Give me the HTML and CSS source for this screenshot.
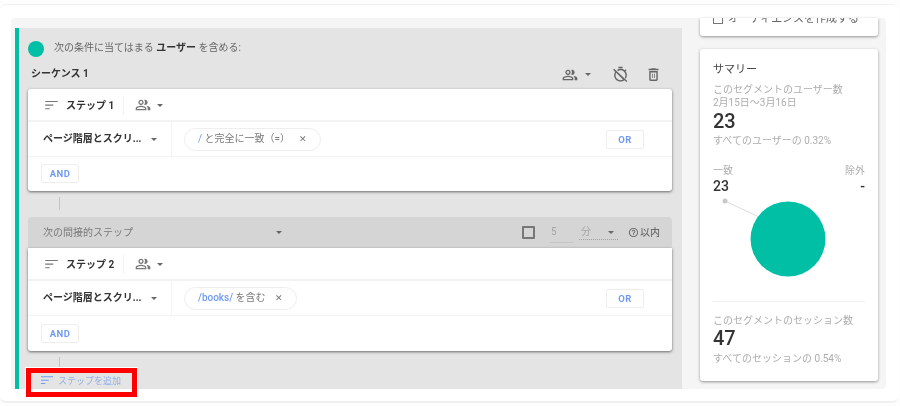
FILE: index.html
```html
<!DOCTYPE html>
<html lang="ja">
<head>
<meta charset="utf-8">
<title>セグメント</title>
<link rel="stylesheet" href="styles.css">
</head>
<body>
<svg class="defs" width="0" height="0" aria-hidden="true">
  <symbol id="people" viewBox="0 0 24 24"><path d="M16.67 13.13C18.04 14.06 19 15.32 19 17v3h4v-3c0-2.18-3.57-3.47-6.33-3.87zM15 12c2.21 0 4-1.79 4-4s-1.79-4-4-4c-.47 0-.91.1-1.33.24C14.5 5.27 15 6.58 15 8s-.5 2.73-1.33 3.76c.42.14.86.24 1.33.24zM9 12c2.21 0 4-1.79 4-4s-1.79-4-4-4-4 1.79-4 4 1.79 4 4 4zm0-6c1.1 0 2 .9 2 2s-.9 2-2 2-2-.9-2-2 .9-2 2-2zM9 13c-2.67 0-8 1.34-8 4v3h16v-3c0-2.66-5.33-4-8-4zm6 5H3v-.99C3.2 16.29 6.3 15 9 15s5.8 1.29 6 2v1z"/></symbol>
  <symbol id="sort" viewBox="0 0 14 10"><path d="M0 0h14v1.2H0zM0 4h9v1.2H0zM0 8h5v1.2H0z"/></symbol>
</svg>
<main class="panel">
  <section class="builder">
    <div class="seq">
      <div class="cond">
        <span class="dot"></span>
        <span>次の条件に当てはまる <b>ユーザー</b> を含める:</span>
      </div>
      <div class="seq-head">
        <b>シーケンス 1</b>
        <div class="seq-tools">
          <svg class="ic-people-lg"><use href="#people"/></svg>
          <span class="caret caret-lg"></span>
          <svg class="ic-tool ic-timer" viewBox="0 0 24 24"><path d="M19.04 4.55l-1.42 1.42C16.07 4.74 14.12 4 12 4c-1.83 0-3.53.55-4.95 1.48l1.46 1.46C9.53 6.35 10.73 6 12 6c3.87 0 7 3.13 7 7 0 1.27-.35 2.47-.94 3.49l1.45 1.45C20.45 16.53 21 14.83 21 13c0-2.12-.74-4.07-1.97-5.61l1.42-1.42-1.41-1.42zM15 1H9v2h6V1zM3.02 4L1.61 5.41l2.92 2.92C3.57 9.77 3 11.82 3 13c0 4.97 4.03 9 9 9 2.12 0 4.07-.74 5.61-1.97l2.58 2.58 1.41-1.41L3.02 4zM12 20c-3.87 0-7-3.13-7-7 0-1.28.35-2.48.95-3.51l9.55 9.56c-1.02.6-2.22.95-3.5.95z"/></svg>
          <svg class="ic-tool ic-trash" viewBox="0 0 24 24"><path d="M6 19c0 1.1.9 2 2 2h8c1.1 0 2-.9 2-2V7H6v12zM8 9h8v10H8V9zm7.5-5l-1-1h-5l-1 1H5v2h14V4zM10 11h1v6h-1zM13 11h1v6h-1z"/></svg>
        </div>
      </div>

      <article class="step">
        <header class="step-head">
          <svg class="ic-sort"><use href="#sort"/></svg>
          <b class="step-name">ステップ 1</b>
          <svg class="ic-people"><use href="#people"/></svg>
          <span class="caret"></span>
        </header>
        <div class="step-row">
          <div class="dim"><b>ページ階層とスクリ...</b><span class="caret"></span></div>
          <div class="filter">
            <span class="chip"><span class="val">/</span> と完全に一致（=）<span class="x">✕</span></span>
            <button class="btn btn-or">OR</button>
          </div>
        </div>
        <div class="step-foot"><button class="btn">AND</button></div>
      </article>

      <div class="link link-first"></div>

      <div class="gap-bar">
        <span class="gap-label">次の間接的ステップ</span>
        <span class="caret gap-caret"></span>
        <span class="check"></span>
        <span class="num">5</span>
        <span class="unit">分<span class="caret"></span></span>
        <svg class="ic-help" viewBox="0 0 24 24"><path d="M11 18h2v-2h-2v2zm1-16C6.48 2 2 6.48 2 12s4.48 10 10 10 10-4.48 10-10S17.52 2 12 2zm0 18c-4.41 0-8-3.59-8-8s3.59-8 8-8 8 3.59 8 8-3.59 8-8 8zm0-14c-2.21 0-4 1.79-4 4h2c0-1.1.9-2 2-2s2 .9 2 2c0 2-3 1.75-3 5h2c0-2.25 3-2.5 3-5 0-2.21-1.79-4-4-4z"/></svg>
        <span class="within">以内</span>
      </div>

      <article class="step step-joined">
        <header class="step-head">
          <svg class="ic-sort"><use href="#sort"/></svg>
          <b class="step-name">ステップ 2</b>
          <svg class="ic-people"><use href="#people"/></svg>
          <span class="caret"></span>
        </header>
        <div class="step-row">
          <div class="dim"><b>ページ階層とスクリ...</b><span class="caret"></span></div>
          <div class="filter">
            <span class="chip"><span class="val val-strong">/books/</span> を含む<span class="x">✕</span></span>
            <button class="btn btn-or">OR</button>
          </div>
        </div>
        <div class="step-foot"><button class="btn">AND</button></div>
      </article>

      <div class="link link-last"></div>

      <div class="add">
        <svg class="ic-add"><use href="#sort"/></svg>
        <span>ステップを追加</span>
        <span class="highlight"></span>
      </div>
    </div>
  </section>

  <aside class="side">
    <div class="card card-clip">
      <div class="aud"><span class="aud-box"></span>オーディエンスを作成する</div>
    </div>
    <div class="card card-sum">
      <h2>サマリー</h2>
      <p class="muted tight">このセグメントのユーザー数<br>2月15日〜3月16日</p>
      <div class="big">23</div>
      <p class="muted share">すべてのユーザーの 0.32%</p>
      <div class="split"><span class="muted">一致</span><span class="muted">除外</span></div>
      <div class="split split-val"><span>23</span><span>-</span></div>
      <svg class="pie" viewBox="0 0 152 104" width="152" height="104">
        <line x1="12" y1="4" x2="46" y2="20" stroke="#dcdcdc" stroke-width="1"/>
        <circle cx="12" cy="4" r="2.5" fill="#c8c8c8"/>
        <circle cx="75" cy="42" r="37.5" fill="#00bfa5"/>
      </svg>
      <div class="rule"></div>
      <p class="muted">このセグメントのセッション数</p>
      <div class="big big-2">47</div>
      <p class="muted tail">すべてのセッションの 0.54%</p>
    </div>
  </aside>
</main>
</body>
</html>
```
FILE: styles.css
```css
* { box-sizing: border-box; }
html, body { margin: 0; height: 406px; overflow: hidden; }
body {
  background: #fdfdfd;
  font-family: Roboto, "Noto Sans CJK JP", sans-serif;
  font-size: 10px;
  line-height: 14px;
  color: #757575;
  filter: blur(0.45px);
}
.defs { position: absolute; }
b { color: #333; font-weight: 700; }
p { margin: 0; }
svg { display: block; fill: currentColor; }

.panel {
  margin: 4px 2px 0 0;
  height: 399px;
  padding: 13px 11px 12px 11px;
  background: #fff;
  border-top: 1px solid #f0f0f0;
  border-bottom: 2px solid #f0f0f0;
  border-radius: 6px;
  display: flex;
}
.builder {
  width: 671px;
  padding: 10px 0 0 4px;
  background: #f5f5f5;
  border-radius: 4px 0 0 0;
}
.seq {
  height: 361px;
  padding: 0 10px 0 9px;
  background: #e4e4e4;
  border-left: 4px solid #00bfa5;
}
.cond {
  height: 40px;
  display: flex;
  align-items: center;
  gap: 10px;
  color: #666;
}
.dot { width: 16px; height: 16px; margin-top: 2px; border-radius: 50%; background: #00bfa5; }
.seq-head {
  height: 21px;
  margin-left: 3px;
  display: flex;
  justify-content: space-between;
  align-items: flex-start;
}
.seq-head > b { line-height: 12px; }
.seq-tools { display: flex; align-items: center; color: #666; margin-top: -2px; padding-right: 10px; }
.ic-people-lg { width: 16px; height: 16px; }
.caret {
  display: inline-block;
  width: 0; height: 0;
  border: 3px solid transparent;
  border-top: 3px solid #666;
  border-bottom: 0;
}
.caret-lg { margin-left: 7px; }
.ic-tool { width: 17px; height: 17px; }
.ic-timer { margin-left: 21px; }
.ic-trash { margin-left: 16px; }

.step {
  height: 102px;
  background: #fff;
  border-radius: 3px;
  box-shadow: 0 1px 3px rgba(0, 0, 0, .55);
}
.step-joined { border-radius: 0 0 3px 3px; height: 103px; }
.step-head {
  height: 33px;
  display: flex;
  align-items: center;
  border-bottom: 2px solid #f3f3f3;
  padding: 1px 0 0 17px;
}
.ic-sort { width: 13px; height: 9px; color: #777; }
.step-name {
  margin-left: 8px;
  width: 58px;
  height: 19px;
  line-height: 19px;
  border-right: 1px solid #f1f1f1;
}
.ic-people { width: 16px; height: 16px; margin-left: 11px; color: #777; }
.step-head .caret { margin-left: 6px; }
.step-row {
  height: 35px;
  display: flex;
  border-bottom: 1px solid #f3f3f3;
}
.dim {
  width: 144px;
  padding: 0 14px 0 15px;
  display: flex;
  justify-content: space-between;
  align-items: center;
  border-right: 1px solid #f3f3f3;
}
.filter {
  flex: 1;
  display: flex;
  justify-content: space-between;
  align-items: center;
  padding: 0 28px 0 12px;
}
.chip {
  height: 23px;
  padding: 0 13px;
  display: flex;
  align-items: center;
  border: 1px solid #eee;
  border-radius: 12px;
  color: #7a7a7a;
  white-space: pre;
}
.val { color: #6f9cf2; }
.val-strong { font-weight: 500; }
.x { margin-left: 9px; font-size: 9px; color: #777; }
.btn {
  width: 38px;
  height: 19px;
  padding: 0;
  background: #fff;
  border: 1px solid #eee;
  border-radius: 2px;
  font: 700 9.5px/17px Roboto, sans-serif;
  letter-spacing: .4px;
  color: #6f9cf2;
}
.step-foot { padding: 7px 0 0 13px; }
.step-joined .step-foot { padding-top: 8px; }

.link { margin-left: 31px; border-left: 1px solid #c4c4c4; }
.link-first { height: 13px; margin-top: 6px; margin-bottom: 7px; }
.link-last { height: 11px; margin-top: 6px; }

.gap-bar {
  height: 31px;
  padding: 0 12px 0 15px;
  display: flex;
  align-items: center;
  background: #d5d5d5;
  border-radius: 4px 4px 0 0;
  color: #7a7a7a;
}
.gap-label { width: 233px; }
.gap-caret { margin-right: 240px; }
.check { width: 13px; height: 13px; border: 2px solid #777; border-radius: 1px; }
.num {
  width: 24px;
  height: 20px;
  margin-left: 14px;
  padding-left: 2px;
  line-height: 17px;
  border-bottom: 1px solid #c6c6c6;
  color: #a5a5a5;
}
.unit {
  width: 39px;
  height: 14px;
  margin: 0 0 0 6px;
  padding: 0 4px 0 2px;
  display: flex;
  justify-content: space-between;
  align-items: center;
  border-bottom: 1px dotted #a0a0a0;
  color: #a5a5a5;
}
.ic-help { width: 11px; height: 11px; margin-left: 10px; color: #666; }
.within { margin-left: 1px; color: #555; }

.add {
  position: relative;
  height: 21px;
  display: flex;
  align-items: center;
  gap: 5px;
  padding: 4px 0 0 13px;
  font-size: 9px;
  color: #93aee6;
}
.ic-add { width: 12px; height: 9px; color: #6f9cf2; }
.highlight {
  position: absolute;
  left: -2px;
  top: 0;
  width: 111px;
  height: 29px;
  border: 5px solid #f00;
  outline: 1px solid #fff;
}

.side {
  width: 204px;
  padding: 0 8px 0 18px;
  background: #f5f5f5;
  border-radius: 0 4px 4px 0;
}
.card {
  background: #fff;
  border-radius: 3px;
  box-shadow: 0 1px 3px rgba(0, 0, 0, .4);
}
.card-clip {
  height: 18px;
  overflow: hidden;
  padding-left: 13px;
  border-radius: 0 0 3px 3px;
}
.aud {
  margin-top: -6px;
  height: 14px;
  display: flex;
  align-items: center;
  font-size: 11px;
  color: #666;
  white-space: nowrap;
}
.aud-box { width: 10px; height: 10px; border: 1px solid #777; margin-right: 5px; }
.card-sum {
  height: 332px;
  margin-top: 13px;
  padding: 14px 13px 0;
}
h2 { margin: 0 0 6px; font-size: 11px; font-weight: 400; line-height: 14px; color: #444; }
.muted { color: #adadad; }
.tight { line-height: 13px; margin-top: 5px; }
.big {
  margin-top: 0;
  font: 500 20px/24px Roboto, sans-serif;
  color: #333;
}
.share { margin-top: 1px; }
.big-2 { margin-top: -2px; }
.tail { margin-top: 2px; }
.split { display: flex; justify-content: space-between; margin-top: 16px; }
.split-val {
  margin-top: -1px;
  font: 500 14px/18px Roboto, sans-serif;
  color: #333;
}
.pie { margin-top: 2px; }
.rule { height: 1px; margin: 0 0 12px; background: #efefef; }
```
